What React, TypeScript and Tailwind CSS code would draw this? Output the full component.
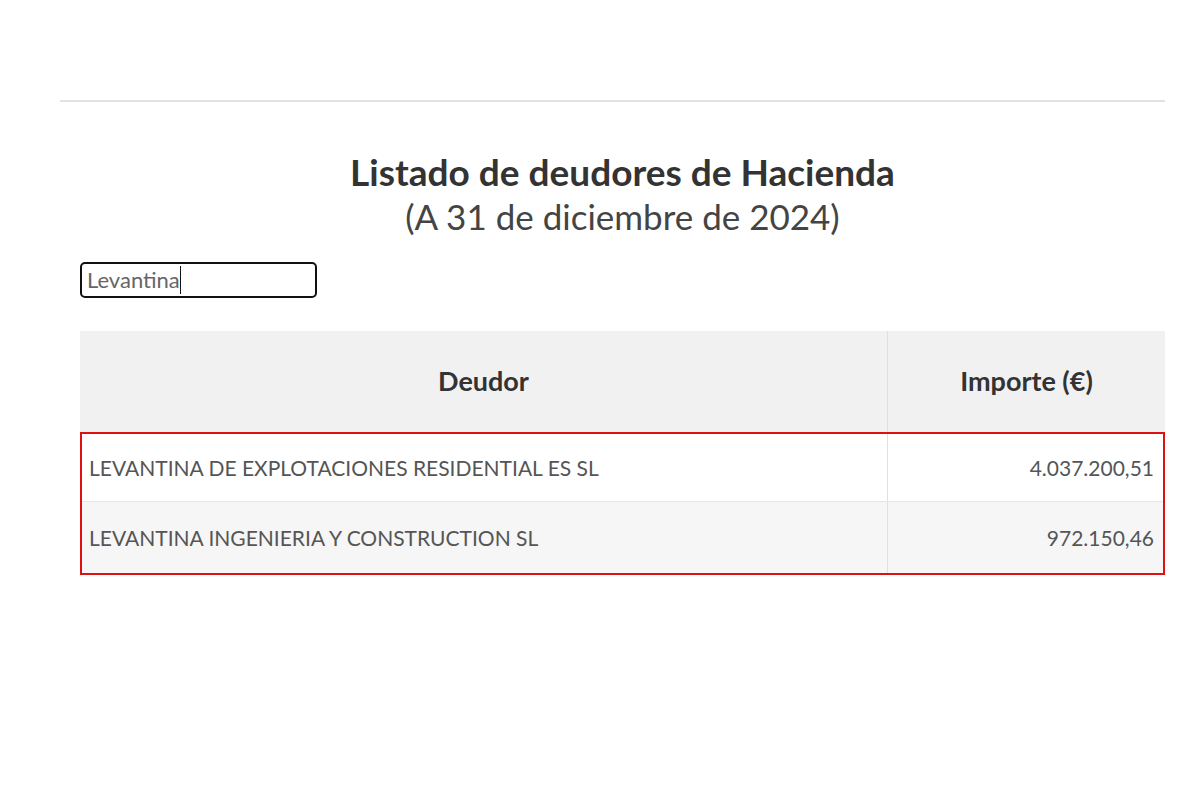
import React from 'react';

const rows = [
  { name: 'LEVANTINA DE EXPLOTACIONES RESIDENTIAL ES SL', amount: '4.037.200,51' },
  { name: 'LEVANTINA INGENIERIA Y CONSTRUCTION SL', amount: '972.150,46' },
];

export default function App() {
  return (
    <div className="w-[1200px] h-[800px] bg-white font-['Lato','Open_Sans',sans-serif] text-[#333]">
      <div className="pt-[100px] pl-[60px] pr-[35px]">
        <div className="h-[2px] bg-[#e2e2e2]" />
      </div>

      <div className="pl-[80px] pr-[35px]">
        {/* Title */}
        <div className="mt-[48px] flex flex-col items-center">
          <h1 className="text-[37px] leading-[44px] font-bold text-[#333]">
            Listado de deudores de Hacienda
          </h1>
          <p className="text-[35px] leading-[45px] text-[#444]">(A 31 de diciembre de 2024)</p>
        </div>

        {/* Search */}
        <div className="mt-[23px] w-[237px] h-[36px] border-2 border-[#111] rounded-[5px] flex items-center pl-[5px]">
          <span className="text-[22px] leading-[26px] text-[#666]">Levantina</span>
          <span className="w-px h-[28px] bg-[#111]" />
        </div>

        {/* Table */}
        <div className="mt-[33px]">
          <div className="flex h-[101px] bg-[#f2f1f1]">
            <div className="w-[808px] border-r border-[#e0e0e0] flex items-center justify-center text-[27px] font-bold text-[#333]">
              Deudor
            </div>
            <div className="flex-1 flex items-center justify-center text-[27px] font-bold text-[#333]">
              Importe (€)
            </div>
          </div>
          <div className="border-2 border-[#e01010]">
            {rows.map((r, i) => (
              <div
                key={r.name}
                className={`flex ${i === 0 ? 'h-[68px] bg-white border-b border-[#e6e6e6]' : 'h-[71px] bg-[#f6f6f6]'}`}
              >
                <div className="w-[806px] border-r border-[#e0e0e0] flex items-center pl-[7px] text-[21px] text-[#555]">
                  {r.name}
                </div>
                <div className="flex-1 flex items-center justify-end pr-[9px] text-[21px] text-[#555]">
                  {r.amount}
                </div>
              </div>
            ))}
          </div>
        </div>
      </div>
    </div>
  );
}
